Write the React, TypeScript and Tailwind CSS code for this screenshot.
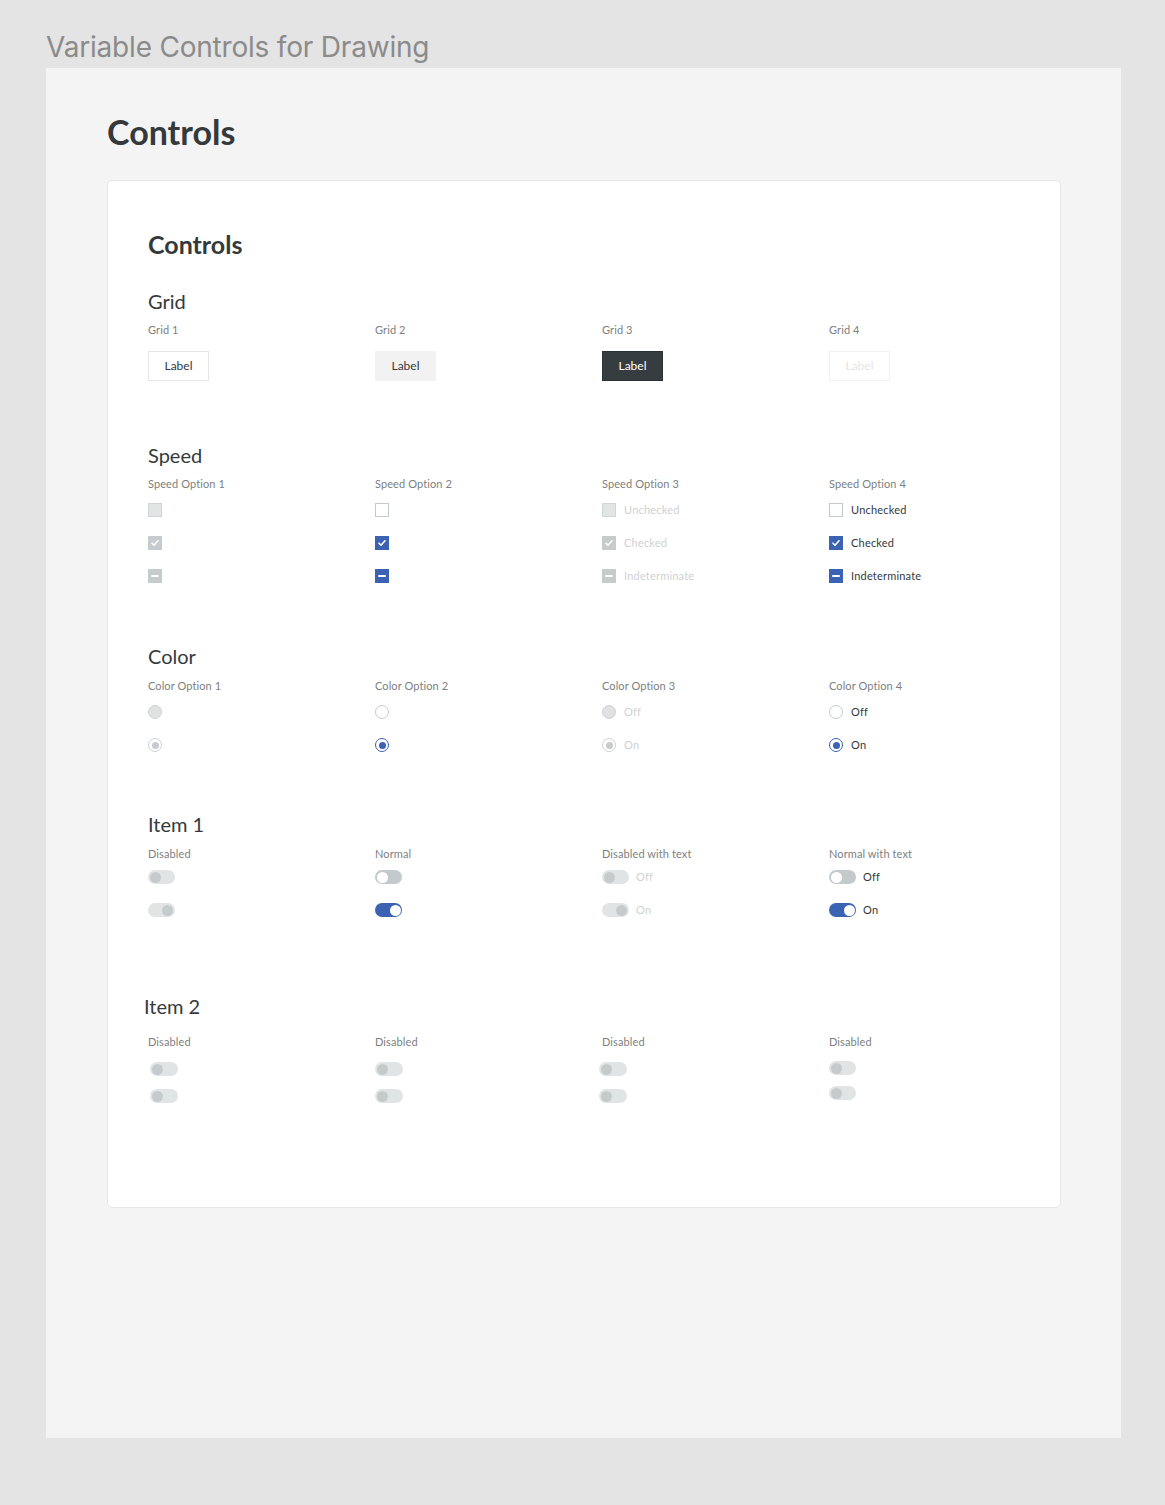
import React from 'react';

function Checkbox({ state, disabled }: { state: 'off' | 'on' | 'mixed'; disabled?: boolean }) {
  let cls = '';
  if (state === 'off') {
    cls = disabled ? 'bg-[#e2e5e6] border-[1.5px] border-[#d0d5d6]' : 'bg-white border-[1.5px] border-[#c4c9cb]';
  } else {
    cls = disabled ? 'bg-[#c6ccce]' : 'bg-[#3c62b4]';
  }
  return (
    <span className={`w-[14px] h-[14px] flex items-center justify-center shrink-0 ${cls}`}>
      {state === 'on' && (
        <svg width="10" height="10" viewBox="0 0 10 10" fill="none">
          <path d="M2 5.2l2 2 4-4.4" stroke="white" strokeWidth="1.6" strokeLinecap="round" strokeLinejoin="round" />
        </svg>
      )}
      {state === 'mixed' && <span className="w-[8px] h-[1.6px] bg-white rounded" />}
    </span>
  );
}

function Radio({ on, disabled }: { on?: boolean; disabled?: boolean }) {
  if (!on) {
    return (
      <span
        className={`w-[14px] h-[14px] rounded-full shrink-0 border-[1.5px] ${
          disabled ? 'bg-[#dfe2e3] border-[#cdd2d4]' : 'bg-white border-[#c4c9cb]'
        }`}
      />
    );
  }
  return (
    <span
      className={`w-[14px] h-[14px] rounded-full shrink-0 border-[1.5px] bg-white flex items-center justify-center ${
        disabled ? 'border-[#cdd2d4]' : 'border-[#3c62b4]'
      }`}
    >
      <span className={`w-[7px] h-[7px] rounded-full ${disabled ? 'bg-[#c6ccce]' : 'bg-[#3c62b4]'}`} />
    </span>
  );
}

function Toggle({ on, disabled, wide }: { on?: boolean; disabled?: boolean; wide?: boolean }) {
  const w = wide ? 'w-[28px]' : 'w-[27px]';
  if (disabled) {
    return (
      <span className={`${w} h-[14px] rounded-full bg-[#e1e4e5] flex items-center px-[2px] shrink-0 ${on ? 'justify-end' : 'justify-start'}`}>
        <span className="w-[11px] h-[11px] rounded-full bg-[#c5cbcd]" />
      </span>
    );
  }
  return (
    <span
      className={`${w} h-[14px] rounded-full flex items-center p-[1.5px] shrink-0 ${
        on ? 'bg-[#3c62b4] justify-end' : 'bg-[#c4c9cb] justify-start'
      }`}
    >
      <span className="w-[11px] h-[11px] rounded-full bg-white" />
    </span>
  );
}

function Heading({ children, className = '' }: { children: React.ReactNode; className?: string }) {
  return <h3 className={`text-[20px] leading-[24px] text-[#343a3c] ${className}`}>{children}</h3>;
}

function ColLabel({ children }: { children: React.ReactNode }) {
  return <div className="text-[11px] leading-[16px] text-[#7d7f80] tracking-[0.1px]">{children}</div>;
}

function RowText({ children, disabled }: { children: React.ReactNode; disabled?: boolean }) {
  return (
    <span className={`text-[11px] leading-[14px] tracking-[0.2px] ${disabled ? 'text-[#cdd2d4]' : 'text-[#343a3c]'}`}>
      {children}
    </span>
  );
}

export default function App() {
  const cols: { disabled: boolean; text: boolean }[] = [
    { disabled: true, text: false },
    { disabled: false, text: false },
    { disabled: true, text: true },
    { disabled: false, text: true },
  ];
  const states: { s: 'off' | 'on' | 'mixed'; t: string }[] = [
    { s: 'off', t: 'Unchecked' },
    { s: 'on', t: 'Checked' },
    { s: 'mixed', t: 'Indeterminate' },
  ];
  const itemLabels = ['Disabled', 'Normal', 'Disabled with text', 'Normal with text'];

  return (
    <div className="min-h-[1505px] bg-[#e4e4e4] pt-[30px] font-['Lato',sans-serif]">
      <div className="ml-[46px] text-[28px] leading-[34px] text-[#8b8b8b] font-['Inter',sans-serif] tracking-[-0.2px]">
        Variable Controls for Drawing
      </div>
      <div className="ml-[46px] mt-[4px] w-[1075px] h-[1370px] bg-[#f4f4f4] pl-[61px] pt-[44px]">
        <h1 className="text-[34px] leading-[40px] font-bold text-[#343a3c]">Controls</h1>
        <div className="mt-[28px] w-[954px] h-[1028px] bg-white border border-[#e7e7e7] rounded-[5px] pl-[40px] pt-[47px]">
          <h2 className="text-[25px] leading-[32px] font-bold text-[#343a3c]">Controls</h2>

          {/* Grid */}
          <Heading className="mt-[29px]">Grid</Heading>
          <div className="grid grid-cols-[227px_227px_227px_227px] mt-[9px]">
            <div>
              <ColLabel>Grid 1</ColLabel>
              <button className="mt-[13px] w-[61px] h-[30px] bg-white border border-[#e6e6e6] text-[12px] text-[#343a3c]">Label</button>
            </div>
            <div>
              <ColLabel>Grid 2</ColLabel>
              <button className="mt-[13px] w-[61px] h-[30px] bg-[#f2f2f2] text-[12px] text-[#343a3c]">Label</button>
            </div>
            <div>
              <ColLabel>Grid 3</ColLabel>
              <button className="mt-[13px] w-[61px] h-[30px] bg-[#353d40] border border-[#2b3134] text-[12px] text-white">Label</button>
            </div>
            <div>
              <ColLabel>Grid 4</ColLabel>
              <button className="mt-[13px] w-[61px] h-[30px] bg-white border border-[#f1f1f1] text-[12px] text-[#e6e6e6]">Label</button>
            </div>
          </div>

          {/* Speed */}
          <Heading className="mt-[62px]">Speed</Heading>
          <div className="grid grid-cols-[227px_227px_227px_227px] mt-[9px]">
            {cols.map((c, i) => (
              <div key={i}>
                <ColLabel>Speed Option {i + 1}</ColLabel>
                <div className="mt-[11px] flex flex-col gap-[19px]">
                  {states.map((st) => (
                    <div key={st.t} className="flex items-center gap-[8px] h-[14px]">
                      <Checkbox state={st.s} disabled={c.disabled} />
                      {c.text && <RowText disabled={c.disabled}>{st.t}</RowText>}
                    </div>
                  ))}
                </div>
              </div>
            ))}
          </div>

          {/* Color */}
          <Heading className="mt-[61px]">Color</Heading>
          <div className="grid grid-cols-[227px_227px_227px_227px] mt-[10px]">
            {cols.map((c, i) => (
              <div key={i}>
                <ColLabel>Color Option {i + 1}</ColLabel>
                <div className="mt-[11px] flex flex-col gap-[19px]">
                  {[false, true].map((on) => (
                    <div key={String(on)} className="flex items-center gap-[8px] h-[14px]">
                      <Radio on={on} disabled={c.disabled} />
                      {c.text && <RowText disabled={c.disabled}>{on ? 'On' : 'Off'}</RowText>}
                    </div>
                  ))}
                </div>
              </div>
            ))}
          </div>

          {/* Item 1 */}
          <Heading className="mt-[60px]">Item 1</Heading>
          <div className="grid grid-cols-[227px_227px_227px_227px] mt-[10px]">
            {cols.map((c, i) => (
              <div key={i}>
                <ColLabel>{itemLabels[i]}</ColLabel>
                <div className="mt-[8px] flex flex-col gap-[19px]">
                  {[false, true].map((on) => (
                    <div key={String(on)} className="flex items-center gap-[7px] h-[14px]">
                      <Toggle on={on} disabled={c.disabled} />
                      {c.text && <RowText disabled={c.disabled}>{on ? 'On' : 'Off'}</RowText>}
                    </div>
                  ))}
                </div>
              </div>
            ))}
          </div>

          {/* Item 2 */}
          <Heading className="mt-[77px] -ml-[4px]">Item 2</Heading>
          <div className="grid grid-cols-[227px_227px_227px_227px] mt-[16px]">
            <div>
              <ColLabel>Disabled</ColLabel>
              <div className="mt-[12px] ml-[2px] flex flex-col gap-[13px]">
                <Toggle disabled wide />
                <Toggle disabled wide />
              </div>
            </div>
            <div>
              <ColLabel>Disabled</ColLabel>
              <div className="mt-[12px] flex flex-col gap-[13px]">
                <Toggle disabled wide />
                <Toggle disabled wide />
              </div>
            </div>
            <div>
              <ColLabel>Disabled</ColLabel>
              <div className="mt-[12px] -ml-[3px] flex flex-col gap-[13px]">
                <Toggle disabled wide />
                <Toggle disabled wide />
              </div>
            </div>
            <div>
              <ColLabel>Disabled</ColLabel>
              <div className="mt-[11px] flex flex-col gap-[11px]">
                <Toggle disabled />
                <Toggle disabled />
              </div>
            </div>
          </div>
        </div>
      </div>
    </div>
  );
}
